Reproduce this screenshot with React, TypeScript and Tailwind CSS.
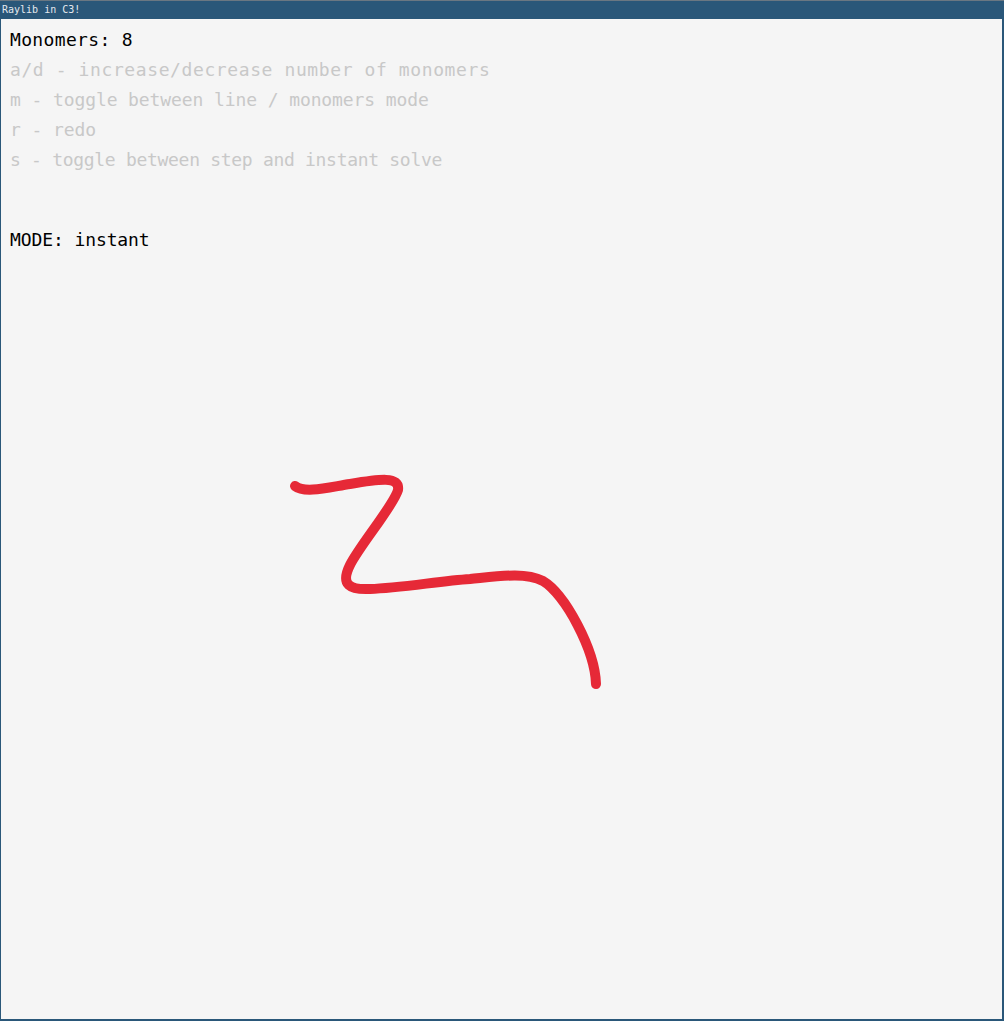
export default function App() {
  const help = [
    { text: "a/d - increase/decrease number of monomers", cls: "tracking-[0.6px]" },
    { text: "m - toggle between line / monomers mode", cls: "tracking-[-0.1px]" },
    { text: "r - redo", cls: "tracking-[-0.1px]" },
    { text: "s - toggle between step and instant solve", cls: "tracking-[-0.3px]" },
  ];

  return (
    <div className="relative flex h-[1021px] w-[1004px] flex-col bg-[#2a5779]">
      {/* window title bar */}
      <div className="h-px bg-[#6a7782]" />
      <div className="flex h-[18px] items-center pl-[2px] font-['DejaVu_Sans_Mono',monospace] text-[10px] leading-none text-[#e4e9ee]">
        Raylib in C3!
      </div>

      {/* raylib canvas */}
      <div className="ml-px mr-[2px] mb-[2px] flex-1 bg-[#f5f5f5] pl-[9px] pt-[6px] font-['DejaVu_Sans_Mono',monospace] text-[18px] leading-[30px]">
        <div className="tracking-[0.35px] text-black">Monomers: 8</div>
        {help.map((h) => (
          <div key={h.text} className={`text-[#c8c8c8] ${h.cls}`}>
            {h.text}
          </div>
        ))}
        <div className="mt-[50px] tracking-[-0.1px] text-black">MODE: instant</div>
      </div>

      {/* the polymer chain */}
      <svg
        className="pointer-events-none absolute left-0 top-0"
        width={1004}
        height={1021}
        viewBox="0 0 1004 1021"
      >
        <path
          d="M295,486 C305,494 330,487 350,484 C380,479 400,476 398,490 C394,505 360,545 350,565 C340,585 350,590 370,589 C400,588 440,581 470,579 C500,576 525,572 543,581 C565,594 595,650 596,684"
          fill="none"
          stroke="#e62937"
          strokeWidth={10}
          strokeLinecap="round"
          strokeLinejoin="round"
        />
      </svg>
    </div>
  );
}
